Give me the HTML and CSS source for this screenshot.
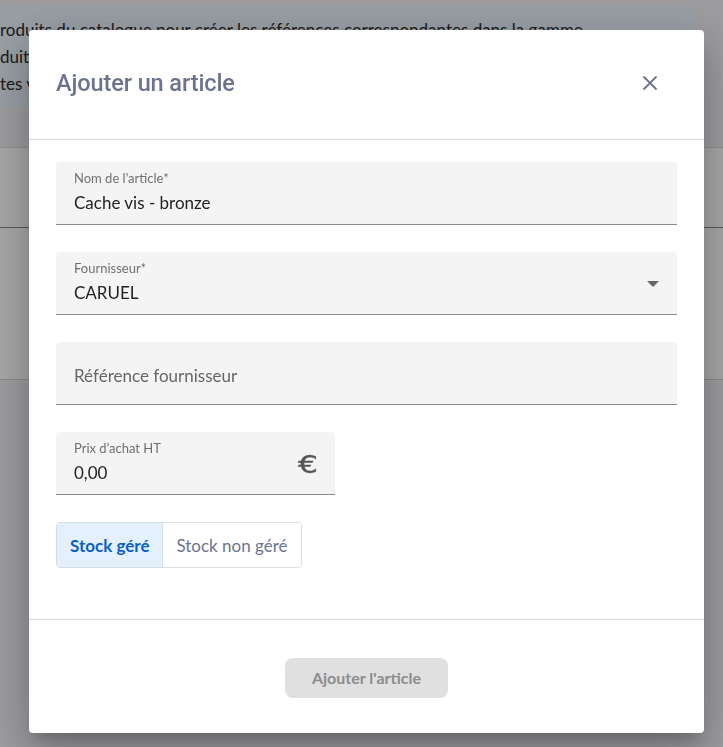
FILE: index.html
```html
<!DOCTYPE html>
<html lang="fr">
<head>
  <meta charset="UTF-8" />
  <meta name="viewport" content="width=device-width, initial-scale=1.0" />
  <title>Ajouter un article</title>
  <link rel="stylesheet" href="styles.css">
</head>
<body>
  <div class="page">
    <div class="info-banner">
      <p>roduits du catalogue pour créer les références correspondantes dans la gamme</p>
      <p>duits sélectionnés</p>
      <p>tes vos</p>
    </div>
    <div class="page-toolbar"></div>
    <div class="page-card">
      <div class="card-head"></div>
      <div class="card-body"></div>
    </div>
  </div>

  <div class="backdrop"></div>

  <div class="modal">
    <div class="modal-header">
      <h2 class="modal-title">Ajouter un article</h2>
      <button class="close-btn" aria-label="Fermer">
        <svg width="16" height="16" viewBox="0 0 16 16">
          <path d="M1.5 1.5 L14.5 14.5 M14.5 1.5 L1.5 14.5" stroke="#6b7390" stroke-width="1.8" fill="none" />
        </svg>
      </button>
    </div>

    <div class="modal-body">
      <div class="field">
        <div class="field-label">Nom de l'article*</div>
        <div class="field-value">Cache vis - bronze</div>
      </div>

      <div class="field field-select">
        <div class="field-text">
          <div class="field-label">Fournisseur*</div>
          <div class="field-value">CARUEL</div>
        </div>
        <span class="select-arrow"></span>
      </div>

      <div class="field field-empty">
        <div class="field-placeholder">Référence fournisseur</div>
      </div>

      <div class="field field-price">
        <div class="field-text">
          <div class="field-label">Prix d’achat HT</div>
          <div class="field-value">0,00</div>
        </div>
        <span class="currency">€</span>
      </div>

      <div class="stock-toggle">
        <button class="toggle-opt active">Stock géré</button>
        <button class="toggle-opt">Stock non géré</button>
      </div>
    </div>

    <div class="modal-footer">
      <button class="submit-btn" disabled>Ajouter l'article</button>
    </div>
  </div>
</body>
</html>
```

FILE: styles.css
```css
html, body {
  margin: 0;
  padding: 0;
  height: 100%;
  overflow: hidden;
  font-family: 'Source Sans Pro', Lato, 'Liberation Sans', sans-serif;
  background: #f0f0f4;
  color: #2b2b2b;
}

.page {
  padding-top: 6px;
}

.info-banner {
  width: 697px;
  height: 102px;
  box-sizing: border-box;
  padding-top: 10px;
  background: #e9f3fb;
  border-radius: 0 12px 12px 0;
  font-size: 17px;
}

.info-banner p {
  margin: 0;
  line-height: 27px;
  white-space: nowrap;
}

.page-toolbar {
  height: 39px;
}

.page-card {
  background: #ffffff;
  border-top: 1px solid #dcdce2;
  border-bottom: 1px solid #d0d0d6;
}

.card-head {
  height: 79px;
  border-bottom: 1px solid #8a8a8a;
}

.card-body {
  height: 151px;
}

.backdrop {
  position: fixed;
  inset: 0;
  background: rgba(0, 0, 0, 0.35);
}

.modal {
  position: fixed;
  left: 29px;
  top: 30px;
  width: 675px;
  height: 703px;
  display: flex;
  flex-direction: column;
  background: #ffffff;
  border-radius: 4px;
  box-shadow: 0 11px 15px -7px rgba(0, 0, 0, 0.2),
              0 24px 38px 3px rgba(0, 0, 0, 0.14),
              0 9px 46px 8px rgba(0, 0, 0, 0.12);
}

.modal-header {
  height: 109px;
  display: flex;
  align-items: center;
  justify-content: space-between;
  padding: 0 46px 0 27px;
  border-bottom: 1px solid #dcdae0;
}

.modal-title {
  margin: 0;
  font-family: Roboto, 'Liberation Sans', sans-serif;
  font-weight: 500;
  font-size: 23.5px;
  color: #6b7390;
  letter-spacing: -0.1px;
  position: relative;
  top: -2px;
}

.close-btn {
  background: none;
  border: none;
  padding: 0;
  width: 16px;
  height: 16px;
  cursor: pointer;
  position: relative;
  top: -2px;
}

.modal-body {
  flex: 1;
  padding: 22px 27px 0 27px;
  display: flex;
  flex-direction: column;
  gap: 27px;
  border-bottom: 1px solid #dcdae0;
}

.field {
  height: 63px;
  box-sizing: border-box;
  padding: 8px 18px 0 18px;
  background: #f4f4f4;
  border-radius: 4px 4px 0 0;
  border-bottom: 1px solid #8c8c8c;
}

.field-label {
  font-size: 13px;
  line-height: 16px;
  color: #707070;
}

.field-value {
  font-size: 17px;
  line-height: 24px;
  margin-top: 5px;
  color: #222222;
}

.field-select,
.field-price {
  display: flex;
  align-items: center;
  justify-content: space-between;
  padding-top: 0;
}

.field-text {
  padding-top: 8px;
  align-self: flex-start;
}

.select-arrow {
  width: 0;
  height: 0;
  border-left: 6px solid transparent;
  border-right: 6px solid transparent;
  border-top: 6px solid #666666;
  position: relative;
  top: 1px;
}

.field-empty {
  display: flex;
  align-items: center;
  padding-top: 0;
}

.field-placeholder {
  font-size: 17px;
  color: #666666;
  position: relative;
  top: 2px;
}

.field-price {
  width: 279px;
  padding-right: 17px;
}

.currency {
  display: inline-block;
  font-family: 'DejaVu Sans', sans-serif;
  font-size: 25px;
  color: #555555;
  -webkit-text-stroke: 0.4px #555555;
  transform: scaleX(1.25);
  transform-origin: right center;
  position: relative;
  top: 1px;
}

.stock-toggle {
  display: flex;
  align-self: flex-start;
  border: 1px solid #dadde4;
  border-radius: 4px;
  overflow: hidden;
}

.toggle-opt {
  height: 44px;
  border: none;
  background: #ffffff;
  font-family: 'Source Sans Pro', Lato, 'Liberation Sans', sans-serif;
  font-size: 17px;
  color: #6b7390;
  padding: 0 13px;
  cursor: pointer;
}

.toggle-opt.active {
  background: #e4f1fc;
  color: #0a5ec8;
  font-weight: bold;
  border-right: 1px solid #dadde4;
}

.modal-footer {
  height: 113px;
  display: flex;
  justify-content: center;
  align-items: center;
}

.submit-btn {
  width: 163px;
  height: 40px;
  border: none;
  border-radius: 8px;
  background: #e0e0e0;
  color: #8c8c8c;
  font-family: 'Source Sans Pro', Lato, 'Liberation Sans', sans-serif;
  font-weight: bold;
  font-size: 16px;
  position: relative;
  top: 1px;
}
```
